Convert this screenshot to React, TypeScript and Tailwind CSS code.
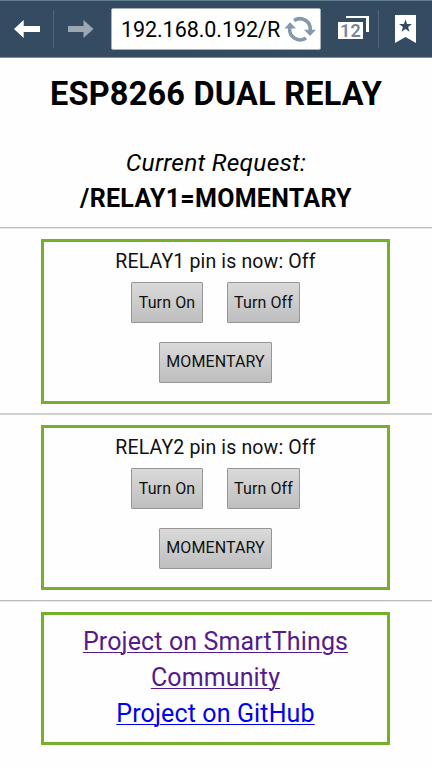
import React from "react";

const buttonClass =
  "flex h-[41px] shrink-0 items-center justify-center whitespace-nowrap rounded-[1px] border border-[#969696] bg-linear-to-b from-[#dadada] to-[#bebebe] text-[16px] leading-[20px] tracking-[0.1px] text-[#111]";

function RelayPanel({ name }: { name: string }) {
  return (
    <section className="ml-[41px] flex h-[165px] w-[349px] flex-col items-center border-3 border-[#76b02a]">
      <p className="mt-[8px] h-[24px] whitespace-nowrap text-[19.5px] leading-[24px] tracking-[0.15px] text-[#111]">
        {name} pin is now: Off
      </p>
      <div className="mt-[8px] flex w-[169px] justify-between">
        <button className={`${buttonClass} w-[72px] pt-px`}>Turn On</button>
        <button className={`${buttonClass} w-[73px] pt-px`}>Turn Off</button>
      </div>
      <button className={`${buttonClass} mt-[19px] w-[113px] pb-px`}>MOMENTARY</button>
    </section>
  );
}

function Toolbar() {
  return (
    <header className="flex h-[58px] items-center border-t border-b border-t-[#5f7b90] border-b-[#7b8b97] bg-[#344b62]">
      <svg className="h-[56px] w-[111px] shrink-0" viewBox="0 1 111 56">
        <path d="M14 29 23.7 20v6H40v6H23.7v6Z" fill="#fff" />
        <path d="M53.5 10v38" stroke="#506678" />
        <path d="M93.5 29 83.5 20v6H68v6h15.500v6Z" fill="#9ba8b3" />
      </svg>
      <div className="flex h-[42px] w-[210px] shrink-0 items-center rounded-[2px] border border-[#a5afb8] bg-white pl-[8px]">
        <span className="w-[161px] whitespace-nowrap pt-px text-[21.5px] leading-[28px] tracking-[-0.05px] text-black">
          192.168.0.192/R
        </span>
        <svg className="ml-[3px] size-[32px] shrink-0" viewBox="284 13 32 32">
          <g fill="none" stroke="#8399ad" strokeWidth="3.6">
            <path d="M294 20.500A10.500 10.500 0 0 1 310.300 30" />
            <path d="M289.700 28A10.500 10.500 0 0 0 306 38" />
          </g>
          <path d="M284.500 28.500 290 22.300l6 6.200ZM304 29.700h12L310 36Z" fill="#8399ad" />
        </svg>
      </div>
      <div className="flex h-[56px] flex-1 items-center">
        <div className="relative mb-[3px] ml-[17px] h-[23px] w-[31px] shrink-0">
          <div className="absolute top-0 right-0 h-[16px] w-[23px] border-t-[2px] border-r-3 border-white" />
          <div className="absolute bottom-0 left-0 flex h-[17px] w-[25px] items-center justify-center bg-white text-[18px] font-semibold leading-[17px] tracking-[0.3px] text-[#74869a]">
            12
          </div>
        </div>
        <svg className="h-[56px] w-[63px] shrink-0" viewBox="369 1 63 56">
          <path d="M378.500 10v38" stroke="#506678" />
          <path d="M395 15h21v28l-10.500-6L395 43Z" fill="#fff" />
          <path d="m405.500 19.500 1.600 4.600h4.900l-3.900 3 1.400 4.700-4-2.800-4 2.800 1.400-4.700-3.900-3h4.900Z" fill="#344b62" />
        </svg>
      </div>
    </header>
  );
}

export default function App() {
  return (
    <div className="h-[768px] w-[432px] overflow-hidden bg-[#fefefe] text-center font-[Roboto,sans-serif] text-black">
      <Toolbar />
      <main>
        <h1 className="mt-[16px] h-[40px] whitespace-nowrap text-[32.5px] font-bold leading-[40px] tracking-[0.2px]">
          ESP8266 DUAL RELAY
        </h1>
        <p className="mt-[33px] h-[32px] whitespace-nowrap text-[24.5px] italic leading-[32px] tracking-[0.25px]">
          Current Request:
        </p>
        <p className="mt-[4px] h-[32px] whitespace-nowrap text-[25px] font-bold leading-[32px] tracking-[0.3px]">
          /RELAY1=MOMENTARY
        </p>
        <hr className="mt-[12px] h-[2px] border-t border-b border-t-[#bcbcbc] border-b-[#e8e8e8]" />
        <div className="pt-[10px]">
          <RelayPanel name="RELAY1" />
        </div>
        <hr className="mt-[9px] h-[2px] border-t border-b border-t-[#cfcfcf] border-b-[#cfcfcf]" />
        <div className="pt-[10px]">
          <RelayPanel name="RELAY2" />
        </div>
        <hr className="mt-[10px] h-[2px] border-t border-b border-t-[#bcbcbc] border-b-[#e8e8e8]" />
        <nav className="ml-[41px] mt-[10px] flex h-[133px] w-[349px] flex-col items-center border-3 border-[#76b02a] pt-[9px] text-[25px] leading-[36px] tracking-[0.13px]">
          <a
            href="#community"
            className="text-[#551a8b] underline decoration-1 underline-offset-2"
          >
            Project on SmartThings
            <br />
            Community
          </a>
          <a href="#github" className="text-[#0000ee] underline decoration-1 underline-offset-2">
            Project on GitHub
          </a>
        </nav>
      </main>
    </div>
  );
}
